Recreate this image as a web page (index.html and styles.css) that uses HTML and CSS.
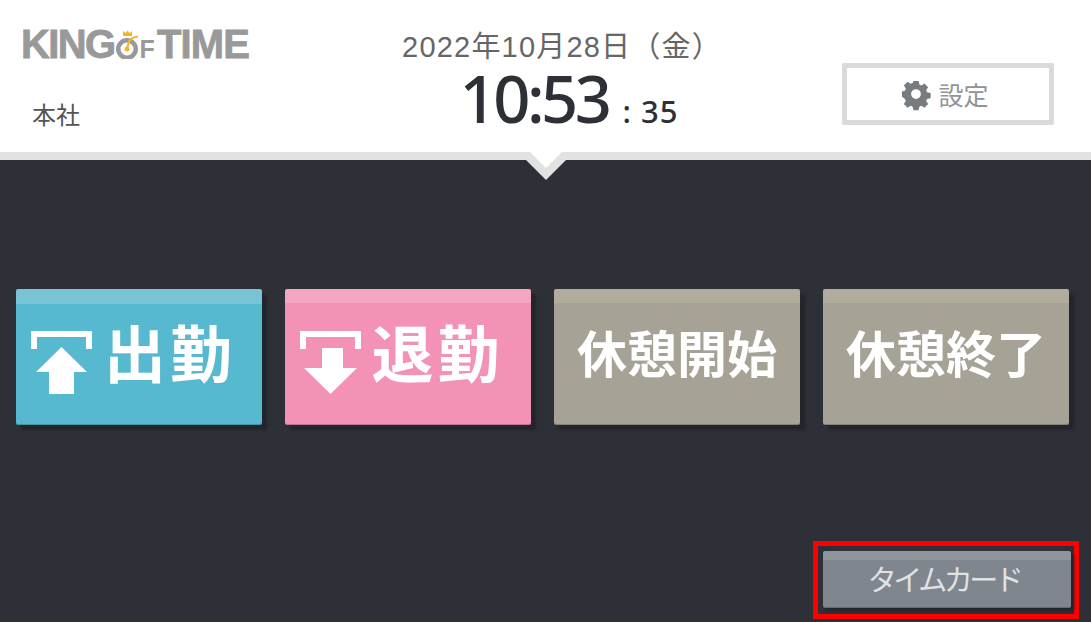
FILE: index.html
```html
<!DOCTYPE html>
<html lang="ja">
<head>
<meta charset="utf-8">
<title>KING OF TIME</title>
<link rel="stylesheet" href="styles.css">
</head>
<body>
<div class="app">
  <header class="header">
    <div class="brand">
      <div class="logo">
        <span class="logo-word">KING</span>
        <svg class="logo-mark" viewBox="0 0 26 34" aria-hidden="true">
          <circle cx="12" cy="24" r="8.750" fill="none" stroke="#999" stroke-width="4.500"/>
          <path d="M8 11V6l2.500 2L12.500 5.500 14.500 8 17 6v5z" fill="#f5b52a"/>
          <path d="M12 23 14.500 16Q16.500 12.500 23 11.500" fill="none" stroke="#f5b52a" stroke-width="2.200"/>
          <circle cx="12" cy="24" r="2.500" fill="#f5b52a"/>
        </svg>
        <span class="logo-f">F</span>
        <span class="logo-word logo-time">TIME</span>
      </div>
      <div class="office">本社</div>
    </div>
    <div class="clock">
      <div class="date">2022年10月28日（金）</div>
      <div class="time"><span class="hm">10:53</span><span class="sec">: 35</span></div>
    </div>
    <button class="settings">
      <svg class="gear" viewBox="0 0 24 24" aria-hidden="true">
        <path fill-rule="evenodd" d="M9.600 0h4.800l.7 3.300 1.900.8 2.800-1.800 3.400 3.400-1.800 2.800.8 1.900 3.300.7v4.800l-3.300.7-.8 1.900 1.800 2.800-3.400 3.400-2.800-1.800-1.900.8-.7 3.300H9.600l-.7-3.300-1.900-.8-2.800 1.800-3.400-3.400 1.800-2.800-.8-1.900L-1 14.400V9.600l2.800-.7.800-1.900-1.800-2.800 3.400-3.400L7 2.600l1.900-.8zM12 7.500a4.500 4.500 0 1 0 0 9 4.500 4.500 0 0 0 0-9z" fill="#777c81"/>
      </svg>
      <span>設定</span>
    </button>
    <svg class="notch" viewBox="0 0 40 28" aria-hidden="true">
      <path d="M0 8 20 28 40 8z" fill="#e2e2e2"/>
      <path d="M4 8h32v-8H4z" fill="#e2e2e2"/>
      <path d="M4 0H36L20 16z" fill="#fff"/>
    </svg>
  </header>
  <main class="main">
    <div class="punches">
      <button class="punch in">
        <svg class="arrow" viewBox="0 0 62 64" aria-hidden="true">
          <path d="M0 18V0h61v18h-6V6H6v12z" fill="#fff"/>
          <path d="M30.500 16 56 41H43v22H18V41H5z" fill="#fff"/>
        </svg>
        <span>出勤</span>
      </button>
      <button class="punch out">
        <svg class="arrow" viewBox="0 0 62 64" aria-hidden="true">
          <path d="M0 18V0h61v18h-6V6H6v12z" fill="#fff"/>
          <path d="M30.500 63 57 37H43V17H22v20H4z" fill="#fff"/>
        </svg>
        <span>退勤</span>
      </button>
      <button class="punch rest"><span>休憩開始</span></button>
      <button class="punch rest"><span>休憩終了</span></button>
    </div>
    <div class="foot">
      <div class="highlight">
        <button class="timecard">タイムカード</button>
      </div>
    </div>
  </main>
</div>
</body>
</html>
```
FILE: styles.css
```css
* { box-sizing: border-box; }
html, body { margin: 0; padding: 0; height: 100%; overflow: hidden; }
body { font-family: "Noto Sans CJK JP", "Noto Sans", sans-serif; background: #2e3038; }
button { font-family: inherit; margin: 0; cursor: pointer; }

.app { display: flex; flex-direction: column; height: 622px; }

.header {
  position: relative;
  flex: none;
  height: 160px;
  background: #fff;
  border-bottom: 8px solid #e2e2e2;
  display: flex;
  align-items: flex-start;
  padding-left: 21px;
}

.brand { width: 322px; padding-top: 30px; }
.logo { display: flex; align-items: flex-end; height: 29px; color: #999; white-space: nowrap; }
.logo-word {
  font-family: "Liberation Sans", sans-serif;
  font-weight: 700;
  font-size: 40px;
  line-height: 29px;
  letter-spacing: -1.600px;
  -webkit-text-stroke: 0.800px #999;
}
.logo-time { letter-spacing: -0.800px; }
.logo-mark { width: 26px; height: 34px; margin: 0 -1px 0 0; flex: none; }
.logo-f {
  font-family: "Liberation Sans", sans-serif;
  font-weight: 700;
  font-size: 25px;
  line-height: 20px;
  margin-right: 2px;
}
.office { margin: 40px 0 0 11px; font-size: 24px; line-height: 30px; color: #555; }

.clock { width: 499px; padding-top: 27px; text-align: center; white-space: nowrap; }
.date {
  margin-left: -61px;
  font-family: "Liberation Sans", "Noto Sans CJK JP", sans-serif;
  font-size: 29px;
  line-height: 40px;
  letter-spacing: 1.200px;
  color: #666;
}
.time { margin-left: -47px; color: #2e3038; line-height: 62px; font-family: "Noto Sans", sans-serif; }
.hm { font-size: 65px; font-weight: 500; letter-spacing: -3.500px; }
.sec { font-size: 31px; font-weight: 500; margin-left: 14px; letter-spacing: 1px; }

.settings {
  position: absolute;
  left: 842px;
  top: 63px;
  width: 212px;
  height: 62px;
  background: #fff;
  border: 5px solid #d9dadb;
  border-radius: 2px;
  display: flex;
  align-items: center;
  justify-content: center;
  gap: 9px;
  color: #8f9499;
  font-size: 25px;
  padding: 0 4px 0 0;
}
.gear { width: 26px; height: 26px; overflow: visible; }

.notch { position: absolute; left: 526px; top: 152px; width: 40px; height: 28px; }

.main { flex: 1; display: flex; flex-direction: column; justify-content: space-between; padding: 129px 0 3px 16px; }
.punches { display: flex; gap: 23px; }
.punch {
  width: 246px;
  height: 136px;
  border: 0;
  border-radius: 2px;
  padding: 15px 0 0;
  color: #fff;
  font-weight: 700;
  font-size: 50px;
  line-height: 1;
  display: flex;
  align-items: center;
  justify-content: center;
  box-shadow: inset 0 -1px rgba(0, 0, 0, .2), 5px 5px 3px #23252b;
  letter-spacing: 0;
}
.punch span { position: relative; top: -14px; }
.in { background: linear-gradient(#78c4d5 0 15px, #57b9cf 15px); gap: 11px; font-size: 62px; padding-right: 11px; }
.out { background: linear-gradient(#f4a5c2 0 14px, #f391b7 14px); gap: 9px; font-size: 62px; padding-right: 12px; }
.rest { background: linear-gradient(#b2ac9f 0 14px, #a7a296 14px); }
.in span, .out span { letter-spacing: 4px; }
.arrow { width: 62px; height: 64px; position: relative; top: -2px; }

.foot { display: flex; justify-content: flex-end; padding-right: 12px; }
.highlight { border: 5px solid #f00; width: 266px; height: 78px; padding: 5px 3px 6px 5px; }
.timecard {
  width: 248px;
  height: 57px;
  border: 0;
  border-radius: 2px;
  padding: 0 6px 3px 0;
  color: #dfe3e6;
  font-size: 29px;
  font-weight: 400;
  letter-spacing: -3.500px;
  line-height: 1;
  background: linear-gradient(#8f959c 0 9px, #7f868d 9px);
  box-shadow: inset 0 -1px rgba(0, 0, 0, .2), 3px 3px 3px #23252b;
}
```
